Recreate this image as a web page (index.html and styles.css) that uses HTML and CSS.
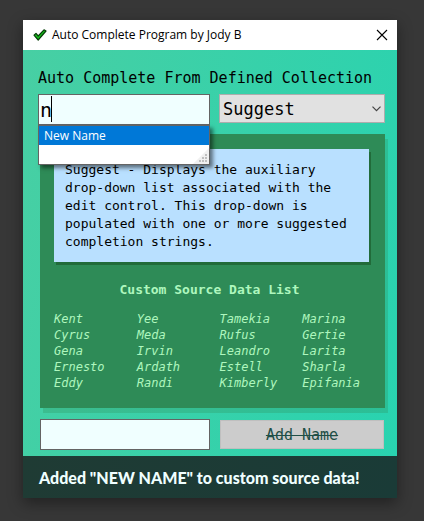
FILE: index.html
```html
<!DOCTYPE html>
<html lang="en">
<head>
<meta charset="utf-8">
<meta name="viewport" content="width=device-width, initial-scale=1">
<title>Auto Complete Program by Jody B</title>
<link rel="stylesheet" href="styles.css">
</head>
<body>
<div class="window">
  <header class="titlebar">
    <svg class="titlebar-icon" viewBox="0 0 14 12" aria-hidden="true">
      <path d="M1 6.2 3 4.4 5.2 7 11 .8 13 2 5.2 11Z" fill="#16c21c" stroke="#073d09" stroke-width="1.2" stroke-linejoin="round"/>
    </svg>
    <h1 class="titlebar-text">Auto Complete Program by Jody B</h1>
    <button class="close" type="button" aria-label="Close">
      <svg viewBox="0 0 10 10" aria-hidden="true"><path d="M0 0 10 10M10 0 0 10" stroke="#000" stroke-width="1.1" fill="none"/></svg>
    </button>
  </header>
  <main class="content">
    <label class="caption" for="query">Auto Complete From Defined Collection</label>
    <div class="row">
      <div class="combo">
        <input class="field query" id="query" type="text" value="n" autocomplete="off">
        <span class="caret"></span>
        <div class="suggestions">
          <ul class="options" role="listbox" aria-label="Suggestions">
            <li class="option" role="option" aria-selected="true">New Name</li>
          </ul>
          <svg class="grip" viewBox="0 0 16 16" aria-hidden="true">
            <path d="M16 0V16H0Z" fill="#f0f0f0"/>
            <path d="M12 6h2v2h-2zM12 9h2v2h-2zM12 12h2v2h-2zM9 9h2v2H9zM9 12h2v2H9zM6 12h2v2H6z" fill="#bfbfbf"/>
          </svg>
        </div>
      </div>
      <div class="mode">
        <select class="mode-select" aria-label="Completion mode">
          <option>Suggest</option>
          <option>Append</option>
          <option>SuggestAppend</option>
        </select>
        <svg class="chevron" viewBox="0 0 9 6" aria-hidden="true"><path d="M.5 .7 4.5 4.7 8.5 .7" fill="none" stroke="#444" stroke-width="1.2"/></svg>
      </div>
    </div>
    <section class="panel">
      <p class="description">Suggest - Displays the auxiliary drop-down list associated with the edit control. This drop-down is populated with one or more suggested completion strings.</p>
      <h2 class="list-title">Custom Source Data List</h2>
      <ul class="names">
        <li>Kent</li><li>Cyrus</li><li>Gena</li><li>Ernesto</li><li>Eddy</li>
        <li>Yee</li><li>Meda</li><li>Irvin</li><li>Ardath</li><li>Randi</li>
        <li>Tamekia</li><li>Rufus</li><li>Leandro</li><li>Estell</li><li>Kimberly</li>
        <li>Marina</li><li>Gertie</li><li>Larita</li><li>Sharla</li><li>Epifania</li>
      </ul>
    </section>
    <div class="row add-row">
      <input class="field" type="text" aria-label="New name">
      <button class="add" type="button" disabled>Add Name</button>
    </div>
  </main>
  <footer class="status">Added "NEW NAME" to custom source data!</footer>
</div>
</body>
</html>
```
FILE: styles.css
```css
* {
  box-sizing: border-box;
}

body {
  margin: 0;
  padding: 20px 27px 23px 23px;
  background: #373737;
  font-family: "DejaVu Sans Mono", "Liberation Mono", monospace;
  color: #000;
}

.window {
  background: linear-gradient(100deg, #48cfa3, #28d3b0);
  box-shadow: 0 5px 14px rgba(0, 0, 0, 0.4);
}

.titlebar {
  display: flex;
  align-items: center;
  height: 30px;
  padding: 0 10px;
  background: #fff;
}

.titlebar-icon {
  width: 14px;
  height: 12px;
  margin-right: 5px;
}

.titlebar-text {
  flex: 1;
  margin: 0;
  font: 12px/16px "Open Sans", sans-serif;
}

.close {
  display: flex;
  padding: 0;
  border: 0;
  background: none;
}

.close svg {
  width: 10px;
  height: 10px;
  overflow: visible;
}

.content {
  padding: 17px 12px 6px 15px;
}

.caption {
  display: block;
  margin-bottom: 5px;
  font-size: 15px;
  line-height: 22px;
}

.row {
  display: grid;
  grid-template-columns: 172fr 166fr;
  gap: 9px;
  align-items: start;
}

.combo,
.mode {
  position: relative;
}

.field {
  display: block;
  width: 100%;
  height: 31px;
  padding: 0 1px;
  border: 1px solid #646464;
  border-radius: 0;
  background: #f0ffff;
  color: #000;
  font-family: inherit;
  font-size: 20px;
  outline: 0;
}

.caret {
  position: absolute;
  top: 2px;
  left: 13px;
  width: 1px;
  height: 26px;
  background: #000;
}

.suggestions {
  position: absolute;
  z-index: 1;
  top: 100%;
  left: 0;
  width: 100%;
  height: 40px;
  border: 1px solid #646464;
  background: #fff;
  box-shadow: 3px 3px 4px rgba(0, 0, 0, 0.5);
}

.options {
  margin: 0;
  padding: 0;
  list-style: none;
}

.option {
  padding: 0 5px;
  background: #0078d7;
  color: #fff;
  font: 12px/19px "Open Sans", sans-serif;
}

.grip {
  position: absolute;
  right: 0;
  bottom: 0;
  width: 16px;
  height: 16px;
}

.mode-select {
  display: block;
  width: 100%;
  height: 29px;
  padding: 0 3px;
  border: 1px solid #adadad;
  border-radius: 0;
  background: #e1e1e1;
  color: #000;
  font-family: inherit;
  font-size: 17px;
  appearance: none;
}

.chevron {
  position: absolute;
  top: 12px;
  right: 4px;
  width: 9px;
  height: 6px;
  pointer-events: none;
}

.panel {
  margin: 9px 0 11px 2px;
  padding: 15px 0 17px 14px;
  background: #2e8b57;
  box-shadow: 3px 5px 0 rgba(46, 139, 87, 0.28);
}

.description {
  margin: 0 16px 17px 0;
  padding: 12px 11px 11px;
  background: #b9e0ff;
  box-shadow: 2px 3px 0 #216b3a;
  font-size: 13px;
  line-height: 18px;
}

.list-title {
  margin: 0 20px 10px 0;
  color: #aef7be;
  font-size: 13px;
  line-height: 22px;
  text-align: center;
}

.names {
  display: grid;
  grid-template-rows: repeat(5, 16px);
  grid-template-columns: repeat(4, 1fr);
  grid-auto-flow: column;
  margin: 0;
  padding: 0;
  color: #aef7be;
  font-size: 12px;
  font-style: italic;
  line-height: 16px;
  list-style: none;
}

.add-row {
  grid-template-columns: 170fr 164fr;
  gap: 10px;
  align-items: center;
  padding: 0 1px 0 2px;
}

.add {
  height: 29px;
  padding: 0;
  border: 1px solid #bfbfbf;
  background: #ccc;
  color: #1f4f46;
  font-family: inherit;
  font-size: 15px;
  text-decoration: line-through;
}

.status {
  padding: 12px 16px 10px;
  background: linear-gradient(100deg, #1f3b34, #1a3b37);
  color: #f0ffff;
  font: 900 16px/20px Lato, sans-serif;
}
```
